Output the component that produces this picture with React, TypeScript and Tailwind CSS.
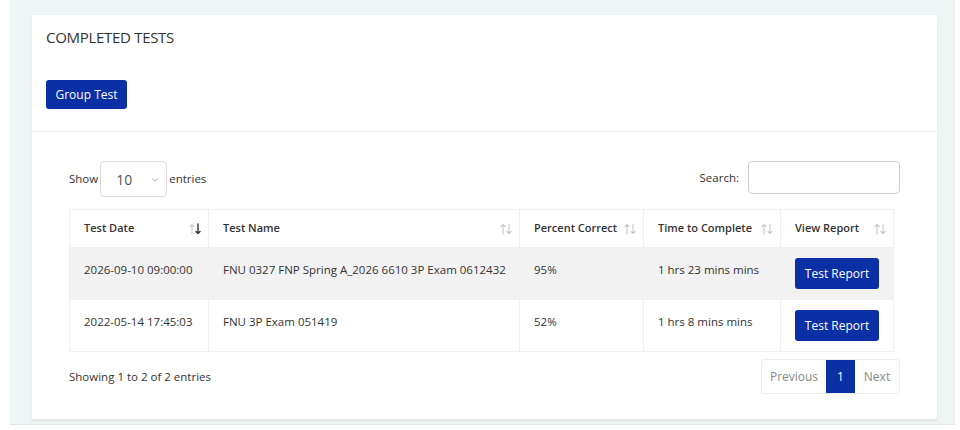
import { ChevronDown } from "lucide-react";

type Row = { date: string; name: string; pct: string; time: string };

const rows: Row[] = [
  { date: "2026-09-10 09:00:00", name: "FNU 0327 FNP Spring A_2026 6610 3P Exam 0612432", pct: "95%", time: "1 hrs 23 mins mins" },
  { date: "2022-05-14 17:45:03", name: "FNU 3P Exam 051419", pct: "52%", time: "1 hrs 8 mins mins" },
];

// thin up/down arrow pair used on sortable column headers
function SortIcon({ active }: { active?: boolean }) {
  return (
    <svg className="absolute right-[7px] top-1/2 -translate-y-1/2" width="12" height="12" viewBox="0 0 12 12" fill="none" strokeWidth="1.1" strokeLinecap="round">
      <g stroke="#c8c8c8">
        <path d="M3 11V1.5M1 3.5L3 1.5L5 3.5" />
      </g>
      <g stroke={active ? "#333" : "#c8c8c8"} strokeWidth={active ? 1.4 : 1.1}>
        <path d="M9 1V10.5M7 8.5L9 10.5L11 8.5" />
      </g>
    </svg>
  );
}

const headers = [
  { label: "Test Date", w: "w-[139px]", active: true },
  { label: "Test Name", w: "w-[311px]" },
  { label: "Percent Correct", w: "w-[124px]" },
  { label: "Time to Complete", w: "w-[137px]" },
  { label: "View Report", w: "w-[113px]" },
];

export default function App() {
  return (
    <div className="w-[960px] h-[430px] overflow-hidden bg-white text-[#333]" style={{ fontFamily: '"Open Sans", "Noto Sans", sans-serif' }}>
      <div className="ml-[10px] w-[945px] h-[425px] bg-[#eff4f4] pt-[15px] pl-[22px] pr-[18px] border-b border-[#e3e8e8]">
        <div className="bg-white w-[905px] h-[405px] shadow-[0_1px_2px_rgba(0,0,0,0.08)] border-b border-[#e2e6e6]">
          <div className="px-[14px] pt-[12px] pb-[22px] border-b border-[#eef1f1]">
            <h2 className="text-[15px] leading-[20px] tracking-[-0.3px]">COMPLETED TESTS</h2>
            <button className="block mt-[33px] h-[29px] w-[81px] rounded-[3px] bg-[#0b2fa5] text-white text-[12px]">Group Test</button>
          </div>

          <div className="pl-[37px] pr-[37px] pt-[29px]">
            <div className="flex items-center justify-between text-[11.5px]">
              <label className="flex items-center gap-[2px]">
                Show
                <span className="relative w-[67px] h-[36px] border border-[#dcdcdc] rounded-[4px] flex items-center pl-[15px] text-[14px] text-[#555]">
                  10
                  <ChevronDown className="absolute right-[6px] top-[13px] w-[10px] h-[10px] text-[#777]" strokeWidth={1.5} />
                </span>
                entries
              </label>
              <label className="flex items-center gap-[9px] -mt-[3px]">
                Search:
                <span className="w-[152px] h-[33px] border border-[#cfcfcf] rounded-[4px]" />
              </label>
            </div>

            <table className="mt-[12px] w-[824px] border-collapse text-[11.5px] table-fixed">
              <thead>
                <tr className="h-[38px]">
                  {headers.map((h) => (
                    <th key={h.label} className={`${h.w} relative text-left font-semibold text-[11px] pl-[14px] border border-[#f0f0f0]`}>
                      {h.label}
                      <SortIcon active={h.active} />
                    </th>
                  ))}
                </tr>
              </thead>
              <tbody>
                {rows.map((r, i) => (
                  <tr key={r.date} className={`h-[52px] ${i === 0 ? "bg-[#f2f2f2]" : "bg-white"}`}>
                    <td className="pl-[14px] align-top pt-[13px] border border-[#f0f0f0]">{r.date}</td>
                    <td className="pl-[14px] align-top pt-[13px] border border-[#f0f0f0]">{r.name}</td>
                    <td className="pl-[14px] align-top pt-[13px] border border-[#f0f0f0]">{r.pct}</td>
                    <td className="pl-[14px] align-top pt-[13px] border border-[#f0f0f0]">{r.time}</td>
                    <td className="pl-[14px] align-middle border border-[#f0f0f0]">
                      <button className="block w-[84px] h-[31px] rounded-[3px] bg-[#0b2fa5] text-white text-[12px]">Test Report</button>
                    </td>
                  </tr>
                ))}
              </tbody>
            </table>

            <div className="mt-[7px] flex items-center justify-between text-[11.5px]">
              <span>Showing 1 to 2 of 2 entries</span>
              <div className="flex h-[35px] border border-[#eeeeee] rounded-[3px] overflow-hidden text-[12px]">
                <span className="w-[64px] flex items-center justify-center text-[#888]">Previous</span>
                <span className="w-[29px] flex items-center justify-center bg-[#0b2fa5] text-white">1</span>
                <span className="w-[44px] flex items-center justify-center text-[#888]">Next</span>
              </div>
            </div>
          </div>
        </div>
      </div>
    </div>
  );
}
